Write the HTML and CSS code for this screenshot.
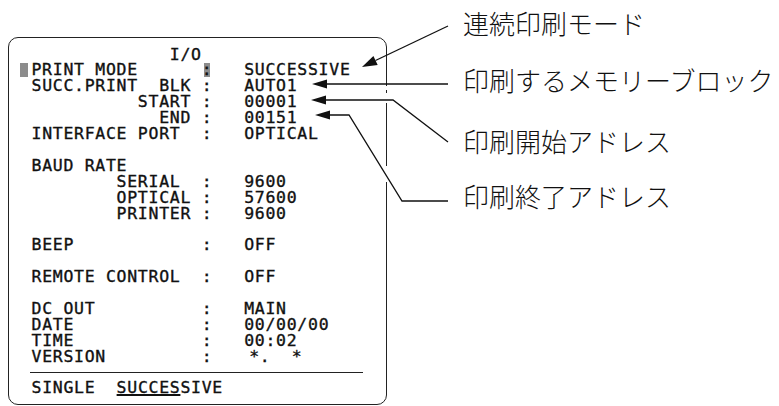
FILE: index.html
```html
<!DOCTYPE html>
<html>
<head>
<meta charset="utf-8">
<title>I/O</title>
<link rel="stylesheet" href="styles.css">
</head>
<body>
<div class="page">
	<div class="screen">
<pre class="menu">
              I/O
<span class="cursor"></span>PRINT MODE      <span class="hl">:</span>   SUCCESSIVE
 SUCC.PRINT  BLK :   AUTO1
           START :   00001
             END :   00151
 INTERFACE PORT  :   OPTICAL

 BAUD RATE
         SERIAL  :   9600
         OPTICAL :   57600
         PRINTER :   9600

 BEEP            :   OFF

 REMOTE CONTROL  :   OFF

 DC OUT          :   MAIN
 DATE            :   00/00/00
 TIME            :   00:02
 VERSION         :   <span class="ver">*. &nbsp;*</span></pre>
		<hr class="rule">
<pre class="menu"> SINGLE  <span class="sel">SUCCES</span>SIVE</pre>
	</div>
	<div class="notes">
		<p class="note mode">連続印刷モード</p>
		<p class="note block">印刷するメモリーブロック</p>
		<p class="note start">印刷開始アドレス</p>
		<p class="note end">印刷終了アドレス</p>
	</div>
</div>
<svg class="leaders" width="779" height="406" viewBox="0 0 779 406">
	<!-- breaks in the frame where the leaders pass -->
	<rect x="384" y="86" width="6" height="4" fill="#fff"/>
	<rect x="384" y="93" width="6" height="10" fill="#fff"/>
	<rect x="384" y="166" width="6" height="16" fill="#fff"/>
	<g stroke="#111" stroke-width="1.3" fill="none">
		<polyline points="448,26 375.5,60.5"/>
		<polyline points="448,84 326,84"/>
		<polyline points="448,142 393,100 325,100"/>
		<polyline points="448,201 402,201 349,115 329,115"/>
	</g>
	<g fill="#111">
		<polygon points="362,67 377.7,65 373.4,56"/>
		<polygon points="312,84 327,79.5 327,88.5"/>
		<polygon points="311,100 326,95.5 326,104.5"/>
		<polygon points="315,115 330,110.5 330,119.5"/>
	</g>
</svg>
</body>
</html>
```

FILE: styles.css
```css
body {
	margin: 0;
	background: #ffffff;
	color: #111111;
}
.page {
	display: flex;
	align-items: flex-start;
}
.screen {
	box-sizing: border-box;
	width: 379px;
	height: 368px;
	margin: 37px 0 0 8px;
	padding: 8.5px 0 0 11.9px;
	border: 1.5px solid #222222;
	border-radius: 10px;
}
.menu {
	margin: 0;
	font-family: "DejaVu Sans Mono", monospace;
	font-size: 16.5px;
	letter-spacing: 0.7px;
	line-height: 15.9px;
	-webkit-text-stroke: 0.35px #111111;
}
.cursor {
	display: inline-block;
	width: 8px;
	height: 14px;
	margin-left: -1px;
	margin-right: 3.6px;
	vertical-align: -2px;
	background: #8c8c8c;
}
.hl {
	display: inline-block;
	background: linear-gradient(#8c8c8c, #8c8c8c) 2px 1px / 6px 14px no-repeat;
}
.ver {
	padding-left: 5px;
}
.sel {
	text-decoration: underline;
	text-decoration-thickness: 1.5px;
	text-underline-offset: 1px;
}
.rule {
	width: 333px;
	height: 0;
	margin: 7.2px 0 7.2px 9.6px;
	border: 0;
	border-top: 1.5px solid #222222;
}
.notes {
	margin-left: 76px;
	font-family: "Noto Sans CJK JP", sans-serif;
	font-weight: 300;
	font-size: 26px;
	line-height: 30px;
	white-space: nowrap;
}
.note {
	margin: 0;
}
.note.mode {
	margin-top: 8px;
}
.note.block {
	margin-top: 27px;
}
.note.start {
	margin-top: 31px;
}
.note.end {
	margin-top: 25px;
}
.leaders {
	position: absolute;
	left: 0;
	top: 0;
	pointer-events: none;
}
```
